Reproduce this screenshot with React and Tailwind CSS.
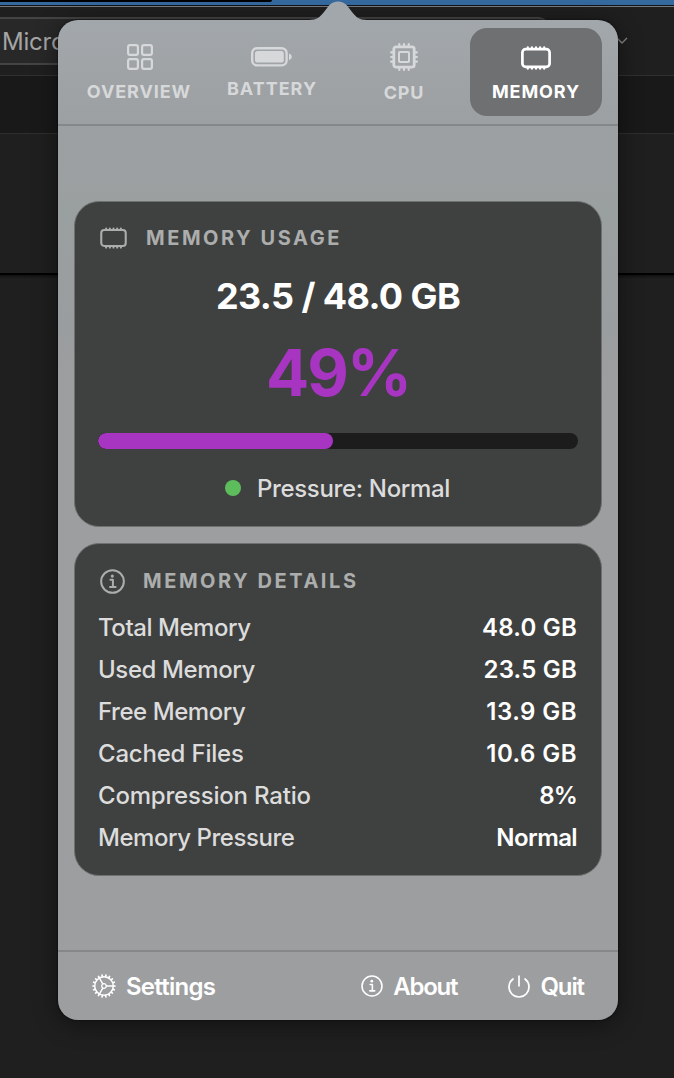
import React from "react";

const range = (n) => Array.from({ length: n }, (_, i) => i);

function GridIcon() {
  return (
    <svg width="26" height="26" viewBox="0 0 26 26" fill="none" stroke="currentColor" strokeWidth="2.2">
      <rect x="1.1" y="1.1" width="9.8" height="9.8" rx="1.8" />
      <rect x="15.1" y="1.1" width="9.8" height="9.8" rx="1.8" />
      <rect x="1.1" y="15.1" width="9.8" height="9.8" rx="1.8" />
      <rect x="15.1" y="15.1" width="9.8" height="9.8" rx="1.8" />
    </svg>
  );
}

function BatteryIcon() {
  return (
    <svg width="42" height="20" viewBox="0 0 42 20" fill="none">
      <rect x="1.2" y="1.2" width="34.4" height="17.2" rx="5" stroke="currentColor" strokeWidth="2.4" />
      <rect x="4" y="4" width="28.8" height="11.6" rx="2.6" fill="currentColor" />
      <path d="M38 6.4C39.7 7 40.8 8.2 40.8 9.8S39.7 12.6 38 13.2Z" fill="currentColor" />
    </svg>
  );
}

function CpuIcon() {
  return (
    <svg width="28" height="28" viewBox="0 0 28 28" fill="none" stroke="currentColor" strokeLinecap="round">
      <rect x="3.8" y="3.8" width="20.4" height="20.4" rx="2.2" strokeWidth="2.8" />
      <rect x="9" y="9" width="10" height="10" rx="0.8" strokeWidth="2" />
      {[9.3, 14, 18.7].map((p) => (
        <path key={p} strokeWidth="2.2" d={`M${p} 3V1.1M${p} 25V26.9M3 ${p}H1.1M25 ${p}H26.9`} />
      ))}
    </svg>
  );
}

function MemoryIcon({ width, height, stroke }) {
  return (
    <svg width={width} height={height} viewBox="0 0 30 24" fill="none" stroke="currentColor" strokeLinecap="round">
      <rect x="1.4" y="3.2" width="27.2" height="17.6" rx="3.2" strokeWidth={stroke} />
      {range(5).map((i) => (
        <path key={i} strokeWidth="2.2" d={`M${6.8 + i * 4.1} 3V1.3M${6.8 + i * 4.1} 21V22.7`} />
      ))}
    </svg>
  );
}

function InfoIcon({ size, stroke }) {
  return (
    <svg width={size} height={size} viewBox="0 0 24 24" fill="none" stroke="currentColor" strokeWidth={stroke} strokeLinecap="round" strokeLinejoin="round">
      <circle cx="12" cy="12" r="10.9" />
      <circle cx="11.8" cy="6.8" r="1.5" fill="currentColor" stroke="none" />
      <path d="M10 10.3H12.4V17.2M9.6 17.3H15" />
    </svg>
  );
}

function GearIcon() {
  return (
    <svg width="24" height="24" viewBox="-12 -12 24 24" fill="none" stroke="currentColor" strokeLinecap="round">
      <circle r="9.3" strokeWidth="1.5" />
      <circle r="2.3" strokeWidth="1.3" />
      {range(18).map((i) => (
        <path key={i} d="M9.8 0H11" strokeWidth="1.7" transform={`rotate(${i * 20})`} />
      ))}
      {[0, 120, 240].map((a) => (
        <path key={a} d="M2.5 0H9" strokeWidth="1.4" transform={`rotate(${a})`} />
      ))}
    </svg>
  );
}

function PowerIcon() {
  return (
    <svg width="22" height="24" viewBox="0 0 22 24" fill="none" stroke="currentColor" strokeWidth="1.7" strokeLinecap="round">
      <path d="M11 2V11.8M5 5A10 10 0 1 0 17 5" />
    </svg>
  );
}

function Tab({ icon, label, active, className }) {
  return (
    <button
      className={`flex h-[88px] w-[132px] flex-col items-center rounded-[17px] ${
        active ? "bg-[#6e7072] text-white" : "text-[#d6d8da]"
      } ${className}`}
    >
      <span className="flex h-[30px] items-center">{icon}</span>
      <span className="mt-[9px] text-[18px] leading-[22px] font-bold tracking-[0.8px]">{label}</span>
    </button>
  );
}

function Card({ children, className }) {
  return (
    <section className={`rounded-[25px] border border-[#6f7171] bg-[#3f4140] px-[23px] ${className}`}>{children}</section>
  );
}

const details = [
  ["Total Memory", "48.0 GB", "tracking-[-0.45px]", "tracking-[0.2px]"],
  ["Used Memory", "23.5 GB", "tracking-[-0.4px]", "tracking-[0.2px]"],
  ["Free Memory", "13.9 GB", "tracking-[-0.45px]", "tracking-[0.45px]"],
  ["Cached Files", "10.6 GB", "tracking-[-0.2px]", "tracking-[0.45px]"],
  ["Compression Ratio", "8%", "tracking-[-0.2px]", "tracking-[-0.9px]"],
  ["Memory Pressure", "Normal", "tracking-[-0.45px]", "tracking-[-0.6px]"],
];

function Desktop() {
  return (
    <div className="flex h-full flex-col bg-[#1f1f1f]">
      <div className="h-[5px] shrink-0 bg-[#356a9f]">
        <div className="h-[2px] w-[272px] rounded-br-full bg-black" />
      </div>
      <div className="h-px shrink-0 bg-[#10151b]" />
      <div className="h-px shrink-0 bg-[#77797c]" />
      <div className="flex h-[68px] shrink-0 items-start bg-[#1f1f1f] pt-[10px]">
        <div className="flex h-[48px] w-[550px] items-center rounded-r-[12px] border-y-2 border-r-2 border-[#444444] bg-[#282828] pt-[2px] pl-[2px] text-[24px] tracking-[-0.2px] text-[#a5a5a5]">
          Micro
        </div>
        <svg className="mt-[20px] ml-[66px]" width="12" height="8" viewBox="0 0 12 8" fill="none" stroke="#858585" strokeWidth="1.4">
          <path d="M1 1L6 6L11 1" />
        </svg>
      </div>
      <div className="h-px shrink-0 bg-[#303030]" />
      <div className="h-[57px] shrink-0 bg-[#191919]" />
      <div className="h-px shrink-0 bg-[#2e2e2e]" />
      <div className="h-[139px] shrink-0 bg-[#1f1f1f]" />
      <div className="h-[2px] shrink-0 bg-black" />
      <div className="h-[4px] shrink-0 bg-linear-to-b from-[#111111] to-[#1f1f1f]" />
    </div>
  );
}

export default function App() {
  return (
    <div className="relative h-[1078px] w-[674px] overflow-hidden font-['Inter','Liberation_Sans',sans-serif]">
      <Desktop />
      <div className="absolute top-[20px] left-[58px] flex h-[1000px] w-[560px] flex-col rounded-[20px] bg-[linear-gradient(180deg,#a2a7ab_0px,#9da0a2_100px,#9a9fa0_190px,#9a9d9f_310px,#9d9ea0_380px,#9d9ea0_100%)] shadow-[0_4px_24px_rgba(0,0,0,0.45),0_0_2px_rgba(0,0,0,0.8)]">
        <svg className="absolute top-[-19px] left-[251px]" width="58" height="20" viewBox="0 0 58 20">
          <path d="M0 20V19C8 19 11 16 15 11L20 4.5C25-1 33-1 38 4.5L43 11C47 16 50 19 58 19V20Z" fill="#a2a7ab" />
        </svg>
        <nav className="flex h-[106px] shrink-0 border-b-2 border-[#85888b] px-4 pt-2">
          <Tab icon={<GridIcon />} label="OVERVIEW" className="pt-[14px] [&>span:last-child]:mr-[2px] [&>span:last-child]:tracking-[0.9px]" />
          <Tab icon={<BatteryIcon />} label="BATTERY" className="pt-[14px] [&>span:last-child]:mt-[6px] [&>span:last-child]:tracking-[1px]" />
          <Tab icon={<CpuIcon />} label="CPU" className="pt-[14px] [&>span:last-child]:mt-[10px]" />
          <Tab icon={<MemoryIcon width={30} height={24} stroke={2.7} />} label="MEMORY" active className="pt-[15px] [&>span:last-child]:mt-[8px] [&>span:last-child]:tracking-[0.9px]" />
        </nav>

        <main className="flex flex-1 flex-col gap-4 px-4 pt-[75px]">
          <Card className="h-[326px]">
            <div className="mt-[24px] flex h-[24px] items-center text-[#acadad]">
              <span className="ml-[2px]">
                <MemoryIcon width={27} height={22} stroke={2.3} />
              </span>
              <h2 className="ml-[19px] text-[20px] font-bold tracking-[2.55px]">MEMORY USAGE</h2>
            </div>
            <div className="mt-[22px] text-center text-[36px] leading-[48px] font-bold tracking-[-0.6px] text-white">23.5 / 48.0 GB</div>
            <div className="mt-[13px] text-center text-[64px] leading-[80px] font-bold tracking-[-2px] text-[#a835c2]">49%</div>
            <div className="mt-[20px] h-4 overflow-hidden rounded-full bg-[#1b1c1b]">
              <div className="h-full w-[235px] rounded-full bg-[#a835c2]" />
            </div>
            <div className="mt-[23px] flex h-[32px] items-center justify-center gap-4 pr-px text-[24px] font-medium text-[#dcdcdc]">
              <span className="size-4 rounded-full bg-[#5dbd5c]" />
              <span className="pt-[2px] tracking-[-0.33px]">Pressure: Normal</span>
            </div>
          </Card>

          <Card className="h-[333px]">
            <div className="mt-[25px] flex h-[24px] items-center text-[#acadad]">
              <span className="ml-[2px]">
                <InfoIcon size={25} stroke={1.9} />
              </span>
              <h2 className="ml-[18px] text-[20px] font-bold tracking-[2.55px]">MEMORY DETAILS</h2>
            </div>
            <dl className="mt-[14px]">
              {details.map(([name, value, nameTracking, valueTracking]) => (
                <div key={name} className="flex h-[42px] items-center justify-between pr-px text-[24px]">
                  <dt className={`font-medium text-[#dcdcdc] ${nameTracking}`}>{name}</dt>
                  <dd className={`font-semibold text-white ${valueTracking}`}>{value}</dd>
                </div>
              ))}
            </dl>
          </Card>
        </main>

        <footer className="flex h-[70px] shrink-0 items-center border-t-2 border-[#858789] pr-[34px] pl-[34px] text-[24px] font-semibold text-white">
          <button className="flex items-center gap-[10px]">
            <GearIcon />
            <span className="pt-px tracking-[-0.75px]">Settings</span>
          </button>
          <button className="ml-auto flex items-center gap-[10px]">
            <InfoIcon size={22} stroke={1.7} />
            <span className="pt-px tracking-[-1.2px]">About</span>
          </button>
          <button className="ml-[51px] flex items-center gap-[10px]">
            <PowerIcon />
            <span className="pt-px tracking-[-1.1px]">Quit</span>
          </button>
        </footer>
      </div>
    </div>
  );
}
